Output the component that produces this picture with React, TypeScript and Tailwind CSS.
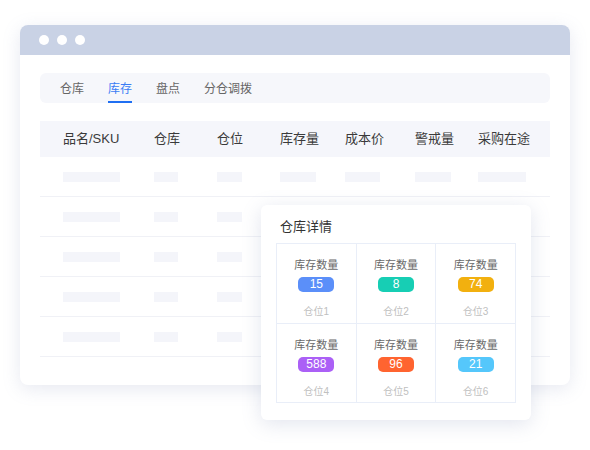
import React from 'react';

const TABS = ['仓库', '库存', '盘点', '分仓调拨'];
const COLS = ['品名/SKU', '仓库', '仓位', '库存量', '成本价', '警戒量', '采购在途'];
// placeholder bar widths per column
const BARS = ['w-[57px]', 'w-[24px]', 'w-[25px]', 'w-[36px]', 'w-[35px]', 'w-[36px]', 'w-[48px]'];

const SLOTS = [
  { qty: 15, color: 'bg-[#5b8ff9]', name: '仓位1' },
  { qty: 8, color: 'bg-[#17ceb4]', name: '仓位2' },
  { qty: 74, color: 'bg-[#f2b00f]', name: '仓位3' },
  { qty: 588, color: 'bg-[#ab60f6]', name: '仓位4' },
  { qty: 96, color: 'bg-[#ff6430]', name: '仓位5' },
  { qty: 21, color: 'bg-[#55c7fb]', name: '仓位6' },
];

const gridCols = 'grid grid-cols-[91px_63px_63px_65px_70px_63px_1fr] pl-[23px]';

export default function App() {
  return (
    <div
      className="relative w-[590px] h-[450px] bg-white overflow-hidden"
      style={{ fontFamily: '"Liberation Sans", "Noto Sans CJK SC", sans-serif' }}
    >
      {/* app window */}
      <div className="mt-[25px] ml-[20px] w-[550px] h-[360px] bg-white rounded-[8px] shadow-[0_4px_18px_rgba(120,135,180,0.18)] overflow-hidden">
        <div className="h-[30px] bg-[#c9d2e5] flex items-center gap-[8px] pl-[19px]">
          <span className="w-[10px] h-[10px] rounded-full bg-white" />
          <span className="w-[10px] h-[10px] rounded-full bg-white" />
          <span className="w-[10px] h-[10px] rounded-full bg-white" />
        </div>

        <div className="mt-[18px] mx-[20px] h-[30px] bg-[#f6f7fb] rounded-[6px] flex pl-[20px] gap-[24px]">
          {TABS.map((t, i) => (
            <div key={t} className="flex flex-col pt-[8px]">
              <span className={`text-[12px] leading-[16px] ${i === 1 ? 'text-[#3a7cf5]' : 'text-[#666]'}`}>{t}</span>
              <div className={`mt-[4px] h-[2px] ${i === 1 ? 'bg-[#1f6ff2]' : ''}`} />
            </div>
          ))}
        </div>

        <div className="mt-[18px] mx-[20px]">
          <div className={`${gridCols} h-[36px] items-center bg-[#f5f6fb] text-[13px] text-[#3a3a3a]`}>
            {COLS.map((c) => (
              <span key={c}>{c}</span>
            ))}
          </div>
          {[0, 1, 2, 3, 4].map((r) => (
            <div key={r} className={`${gridCols} h-[40px] items-center border-b border-[#f0f1f6]`}>
              {BARS.map((w, i) => (
                <div key={i} className={`${w} h-[10px] bg-[#f4f5fa]`} />
              ))}
            </div>
          ))}
        </div>
      </div>

      {/* warehouse detail popover */}
      <div className="absolute left-[261px] top-[205px] w-[270px] h-[215px] bg-white rounded-[6px] shadow-[0_4px_20px_rgba(110,125,170,0.2)] px-[15px] pt-[13px]">
        <div className="text-[13px] leading-[18px] text-[#333] pl-[4px]">仓库详情</div>
        <div className="mt-[7px] grid grid-cols-3 border-l border-t border-[#e9eef8]">
          {SLOTS.map((s) => (
            <div key={s.name} className="h-[79.5px] border-r border-b border-[#e9eef8] flex flex-col items-center pt-[14px]">
              <span className="text-[11px] leading-[14px] text-[#6a6a6a]">库存数量</span>
              <span className={`mt-[5px] w-[36px] h-[15px] rounded-[5px] ${s.color} text-white text-[12px] leading-[15px] text-center`}>{s.qty}</span>
              <span className="mt-[13px] text-[10px] leading-[14px] text-[#c0c0c0]">{s.name}</span>
            </div>
          ))}
        </div>
      </div>
    </div>
  );
}
